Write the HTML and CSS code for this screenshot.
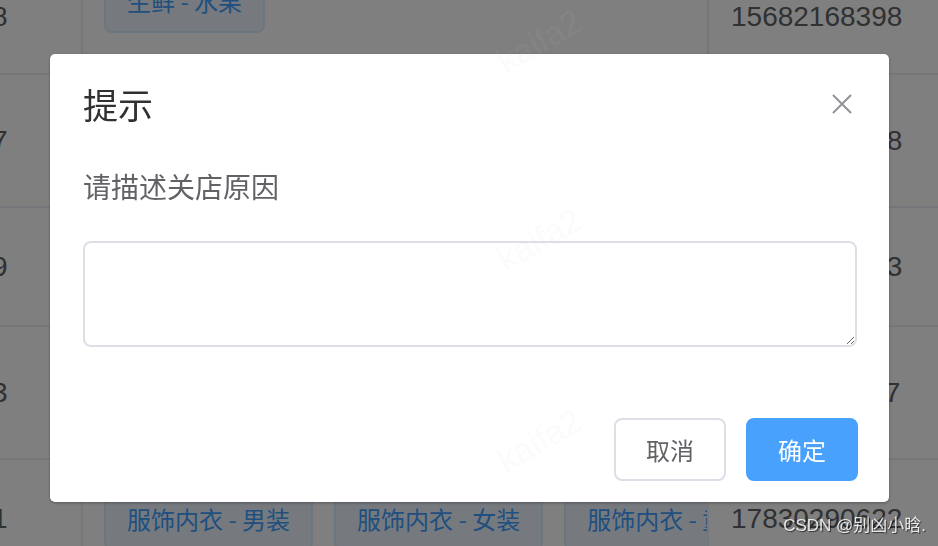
FILE: index.html
```html
<!DOCTYPE html>
<html lang="zh-CN">
<head>
    <meta charset="UTF-8">
    <meta name="viewport" content="width=device-width, initial-scale=1.0">
    <title>店铺管理</title>
    <link rel="stylesheet" href="styles.css">
</head>
<body>
    <div class="table">
        <div class="row r1">
            <div class="cell c-id"><span>8</span></div>
            <div class="cell c-tags"><span class="tag">生鲜 - 水果</span></div>
            <div class="cell c-phone">15682168398</div>
        </div>
        <div class="row r2">
            <div class="cell c-id"><span>7</span></div>
            <div class="cell c-tags"><span class="tag">数码家电 - 手机</span><span class="tag">数码家电 - 电脑</span></div>
            <div class="cell c-phone">13645289978</div>
        </div>
        <div class="row r3">
            <div class="cell c-id"><span>9</span></div>
            <div class="cell c-tags"><span class="tag">美妆个护 - 护肤</span></div>
            <div class="cell c-phone">15923476653</div>
        </div>
        <div class="row r4">
            <div class="cell c-id"><span>3</span></div>
            <div class="cell c-tags"><span class="tag">家居日用 - 厨具</span></div>
            <div class="cell c-phone">18756231107</div>
        </div>
        <div class="row r5">
            <div class="cell c-id"><span>1</span></div>
            <div class="cell c-tags">
                <span class="tag">服饰内衣 - 男装</span>
                <span class="tag">服饰内衣 - 女装</span>
                <span class="tag">服饰内衣 - 童装</span>
            </div>
            <div class="cell c-phone">17830290622</div>
        </div>
    </div>

    <div class="mask"></div>

    <div class="dialog">
        <div class="dialog-header">
            <span class="dialog-title">提示</span>
            <button class="dialog-close" aria-label="关闭">
                <svg width="20" height="20" viewBox="0 0 20 20">
                    <path d="M1 1 L19 19 M19 1 L1 19" stroke="#909399" stroke-width="2" fill="none"/>
                </svg>
            </button>
        </div>
        <div class="dialog-body">
            <p class="tip">请描述关店原因</p>
            <textarea class="reason"></textarea>
        </div>
        <div class="dialog-footer">
            <button class="btn">取消</button>
            <button class="btn btn-primary">确定</button>
        </div>
    </div>

    <div class="watermarks">
        <span class="wm wm1">kaifa2</span>
        <span class="wm wm2">kaifa2</span>
        <span class="wm wm3">kaifa2</span>
    </div>

    <div class="csdn">CSDN @别凶小晗.</div>
</body>
</html>
```

FILE: styles.css
```css
body {
    margin: 0;
    padding: 0;
    overflow: hidden;
    background-color: #fff;
    font-family: "Liberation Sans", "Noto Sans CJK SC", sans-serif;
    color: #606266;
}

/* tabela ao fundo */
.table {
    width: 938px;
}

.row {
    display: flex;
    border-bottom: 2px solid #ebeef5;
    box-sizing: border-box;
}

.r1 { height: 75px; align-items: flex-start; }
.r2 { height: 133px; align-items: center; }
.r3 { height: 119px; align-items: center; }
.r4 { height: 133px; align-items: center; }
.r5 { height: 120px; align-items: center; }

.cell {
    height: 100%;
    display: flex;
    align-items: center;
    box-sizing: border-box;
    font-size: 28px;
    line-height: 34px;
}

.r1 .cell {
    align-items: flex-start;
}

.c-id {
    width: 83px;
    border-right: 2px solid #ebeef5;
    overflow: hidden;
}

.c-id span {
    margin-left: -8px;
}

.c-tags {
    width: 626px;
    padding-left: 21px;
    gap: 21px;
    border-right: 2px solid #ebeef5;
    overflow: hidden;
    white-space: nowrap;
}

.r1 .c-tags .tag {
    margin-top: -31px;
}

.c-phone {
    flex: 1;
    padding-left: 22px;
    color: #606266;
}

.tag {
    display: inline-block;
    flex-shrink: 0;
    height: 64px;
    padding: 0 21px;
    box-sizing: border-box;
    line-height: 60px;
    font-size: 24px;
    font-family: "Noto Sans CJK SC", sans-serif;
    color: #409eff;
    background-color: #ecf5ff;
    border: 2px solid #d9ecff;
    border-radius: 8px;
}

.mask {
    position: fixed;
    top: 0;
    left: 0;
    right: 0;
    bottom: 0;
    background-color: rgba(0, 0, 0, 0.5);
}

/* dialogo */
.dialog {
    position: fixed;
    top: 54px;
    left: 50px;
    width: 839px;
    height: 448px;
    background-color: #fff;
    border-radius: 5px;
    box-shadow: 0 1px 3px rgba(0, 0, 0, 0.3);
    font-family: "Noto Sans CJK SC", sans-serif;
}

.dialog-header {
    position: relative;
    padding: 30px 32px 0 33px;
}

.dialog-title {
    display: block;
    font-size: 35px;
    line-height: 40px;
    color: #303133;
}

.dialog-close {
    position: absolute;
    top: 40px;
    right: 37px;
    width: 20px;
    height: 20px;
    padding: 0;
    border: none;
    background: none;
    cursor: pointer;
}

.dialog-close svg {
    display: block;
}

.dialog-body {
    padding: 42px 32px 0 33px;
}

.tip {
    margin: 0 0 35px;
    font-size: 28px;
    line-height: 40px;
    color: #606266;
}

.reason {
    display: block;
    width: 100%;
    height: 106px;
    box-sizing: border-box;
    border: 2px solid #dcdfe6;
    border-radius: 8px;
    resize: vertical;
    outline: none;
}

.dialog-footer {
    display: flex;
    justify-content: flex-end;
    gap: 20px;
    padding: 71px 31px 21px;
}

.btn {
    width: 112px;
    height: 63px;
    padding: 0;
    font-family: "Noto Sans CJK SC", sans-serif;
    font-size: 24px;
    color: #606266;
    background-color: #fff;
    border: 2px solid #dcdfe6;
    border-radius: 8px;
    cursor: pointer;
}

.btn-primary {
    color: #fff;
    background-color: #47a1fd;
    border-color: #47a1fd;
}

/* marca d'agua */
.watermarks {
    position: fixed;
    top: 0;
    left: 0;
    right: 0;
    bottom: 0;
    pointer-events: none;
}

.wm {
    position: absolute;
    left: 494px;
    font-family: "Liberation Sans", sans-serif;
    font-size: 34px;
    color: rgba(200, 200, 200, 0.07);
    transform: rotate(-30deg);
}

.wm1 { top: 22px; }
.wm2 { top: 220px; }
.wm3 { top: 421px; }

.csdn {
    position: fixed;
    right: 12px;
    bottom: 10px;
    font-family: "Liberation Sans", "Noto Sans CJK SC", sans-serif;
    font-size: 17px;
    color: rgba(255, 255, 255, 0.85);
    text-shadow: 1px 1px 1px rgba(0, 0, 0, 0.6);
}
```
